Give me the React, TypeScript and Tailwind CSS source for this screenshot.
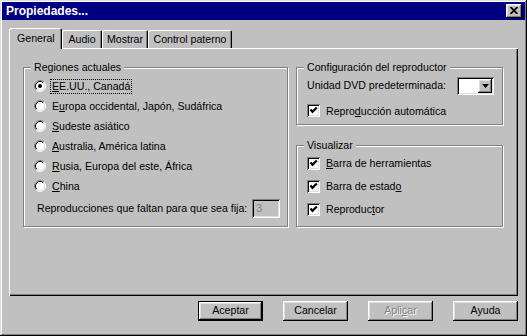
import React from 'react';

const raised =
    'shadow-[inset_-1px_-1px_0_#000,inset_1px_1px_0_#fff,inset_-2px_-2px_0_#808080,inset_2px_2px_0_#dfdfdf]';
const sunken =
    'shadow-[inset_1px_1px_0_#808080,inset_-1px_-1px_0_#fff,inset_2px_2px_0_#000,inset_-2px_-2px_0_#dfdfdf]';

function Radio({ checked }: { checked?: boolean }) {
    return (
        <svg width="12" height="12" viewBox="0 0 12 12" className="shrink-0">
            <circle cx="6" cy="6" r="5" fill="#fff" />
            <path d="M2.11 9.89 A5.5 5.5 0 0 1 9.89 2.11" fill="none" stroke="#808080" />
            <path d="M9.89 2.11 A5.5 5.5 0 0 1 2.11 9.89" fill="none" stroke="#fff" />
            <path d="M2.82 9.18 A4.5 4.5 0 0 1 9.18 2.82" fill="none" stroke="#000" />
            <path d="M9.18 2.82 A4.5 4.5 0 0 1 2.82 9.18" fill="none" stroke="#dfdfdf" />
            {checked && <circle cx="6" cy="6" r="2" fill="#000" />}
        </svg>
    );
}

function Check() {
    return (
        <div className={`w-[13px] h-[13px] bg-white shrink-0 ${sunken} flex items-center justify-center`}>
            <svg width="9" height="9" viewBox="0 0 9 9">
                <path d="M1.5 3.5 L3.5 5.8 L7.8 1.5" fill="none" stroke="#000" strokeWidth="2.2" />
            </svg>
        </div>
    );
}

function Group({ label, className, children }: { label: string; className: string; children: React.ReactNode }) {
    return (
        <div className={`relative border border-[#808080] shadow-[1px_1px_0_#fff,inset_1px_1px_0_#fff] ${className}`}>
            <span className="absolute -top-[8px] left-[7px] px-[3px] bg-[#c0c0c0] leading-[14px]">{label}</span>
            {children}
        </div>
    );
}

function Tab({ label, active, w }: { label: string; active?: boolean; w: string }) {
    return (
        <div
            className={`${w} ${
                active ? 'h-[21px] relative z-10 -mb-[1px] pt-[3px] pl-[8px]' : 'h-[18px] pt-[2px] justify-center'
            } flex bg-[#c0c0c0] rounded-t-[2px] shadow-[inset_1px_1px_0_#fff,inset_-1px_0_0_#000,inset_-2px_0_0_#808080]`}
        >
            {label}
        </div>
    );
}

function Btn({ children, def, disabled }: { children: React.ReactNode; def?: boolean; disabled?: boolean }) {
    return (
        <div className={`w-[65px] h-[20px] ${def ? 'border border-black' : ''}`}>
            <div
                className={`w-full h-full bg-[#c0c0c0] ${raised} flex items-center justify-center ${
                    disabled ? 'text-[#808080] [text-shadow:1px_1px_0_#fff]' : ''
                }`}
            >
                {children}
            </div>
        </div>
    );
}

const regions = [
    { pre: '', u: 'E', post: 'E.UU., Canadá', checked: true },
    { pre: 'E', u: 'u', post: 'ropa occidental, Japón, Sudáfrica' },
    { pre: '', u: 'S', post: 'udeste asiático' },
    { pre: '', u: 'A', post: 'ustralia, América latina' },
    { pre: '', u: 'R', post: 'usia, Europa del este, África' },
    { pre: '', u: 'C', post: 'hina' },
];

export default function App() {
    return (
        <div
            className={`w-[527px] h-[336px] bg-[#c0c0c0] p-[2px] flex flex-col text-[10.6px] text-black whitespace-nowrap shadow-[inset_-1px_-1px_0_#000,inset_1px_1px_0_#dfdfdf,inset_-2px_-2px_0_#808080,inset_2px_2px_0_#fff]`}
            style={{ fontFamily: '"Liberation Sans", Arial, sans-serif' }}
        >
            {/* title bar */}
            <div className="h-[18px] bg-[#000080] flex items-center justify-between pl-[4px] pr-[3px]">
                <span className="text-white font-bold text-[12px]">Propiedades...</span>
                <div className={`w-[16px] h-[14px] bg-[#c0c0c0] ${raised} flex items-center justify-center pb-[1px]`}>
                    <svg width="8" height="7" viewBox="0 0 8 7">
                        <path d="M0.5 0 L7.5 7 M7.5 0 L0.5 7" stroke="#000" strokeWidth="1.8" />
                    </svg>
                </div>
            </div>

            {/* tabs */}
            <div className="mt-[8px] ml-[7px] flex items-end">
                <Tab label="General" active w="w-[53px]" />
                <Tab label="Audio" w="w-[40px]" />
                <Tab label="Mostrar" w="w-[46px]" />
                <Tab label="Control paterno" w="w-[84px]" />
            </div>

            {/* panel */}
            <div className="ml-[7px] w-[509px] h-[248px] pt-[19px] pl-[14px] flex gap-[8px] items-start shadow-[inset_1px_1px_0_#fff,inset_-1px_-1px_0_#000,inset_-2px_-2px_0_#808080]">
                <Group label="Regiones actuales" className="w-[265px] h-[160px] pt-[8px] pl-[10px]">
                    {regions.map((r, i) => (
                        <div key={i} className="h-[20px] flex items-center">
                            <Radio checked={r.checked} />
                            <span className={`ml-[5px] px-[1px] leading-[13px] ${r.checked ? 'outline outline-1 outline-dotted outline-black' : ''}`}>
                                {r.pre}
                                <span className="underline">{r.u}</span>
                                {r.post}
                            </span>
                        </div>
                    ))}
                    <div className="mt-[3px] pl-[3px] flex items-center h-[19px]">
                        <span>Reproducciones que faltan para que sea fija:</span>
                        <div className={`ml-[5px] w-[28px] h-[19px] ${sunken} pl-[4px] flex items-center text-[#808080]`}>3</div>
                    </div>
                </Group>

                <div className="flex flex-col">
                    <Group label="Configuración del reproductor" className="w-[207px] h-[58px] pt-[9px] pl-[10px] pr-[8px]">
                        <div className="h-[18px] flex items-center justify-between">
                            <span>Unidad DVD predeterminada:</span>
                            <div className={`w-[37px] h-[18px] bg-white ${sunken} flex justify-end p-[2px]`}>
                                <div className={`w-[14px] h-[14px] bg-[#c0c0c0] ${raised} flex items-center justify-center`}>
                                    <svg width="7" height="4" viewBox="0 0 7 4">
                                        <path d="M0 0 H7 L3.5 4 Z" fill="#000" />
                                    </svg>
                                </div>
                            </div>
                        </div>
                        <div className="mt-[9px] h-[13px] flex items-center gap-[6px]">
                            <Check />
                            <span className="pt-[2px]">
                                Repro<span className="underline">d</span>ucción automática
                            </span>
                        </div>
                    </Group>

                    <Group label="Visualizar" className="mt-[20px] w-[207px] h-[82px] pt-[11px] pl-[10px] flex flex-col gap-[10px]">
                        <div className="h-[13px] flex items-center gap-[6px]">
                            <Check />
                            <span className="pt-[1px]">
                                <span className="underline">B</span>arra de herramientas
                            </span>
                        </div>
                        <div className="h-[13px] flex items-center gap-[6px]">
                            <Check />
                            <span className="pt-[1px]">
                                Barra de estad<span className="underline">o</span>
                            </span>
                        </div>
                        <div className="h-[13px] flex items-center gap-[6px]">
                            <Check />
                            <span className="pt-[1px]">
                                Reproduc<span className="underline">t</span>or
                            </span>
                        </div>
                    </Group>
                </div>
            </div>

            {/* buttons */}
            <div className="mt-[5px] ml-[7px] w-[509px] flex justify-end gap-[20px]">
                <Btn def>Aceptar</Btn>
                <Btn>Cancelar</Btn>
                <Btn disabled>
                    <span>
                        Apli<span className="underline">c</span>ar
                    </span>
                </Btn>
                <Btn>Ayuda</Btn>
            </div>
        </div>
    );
}
